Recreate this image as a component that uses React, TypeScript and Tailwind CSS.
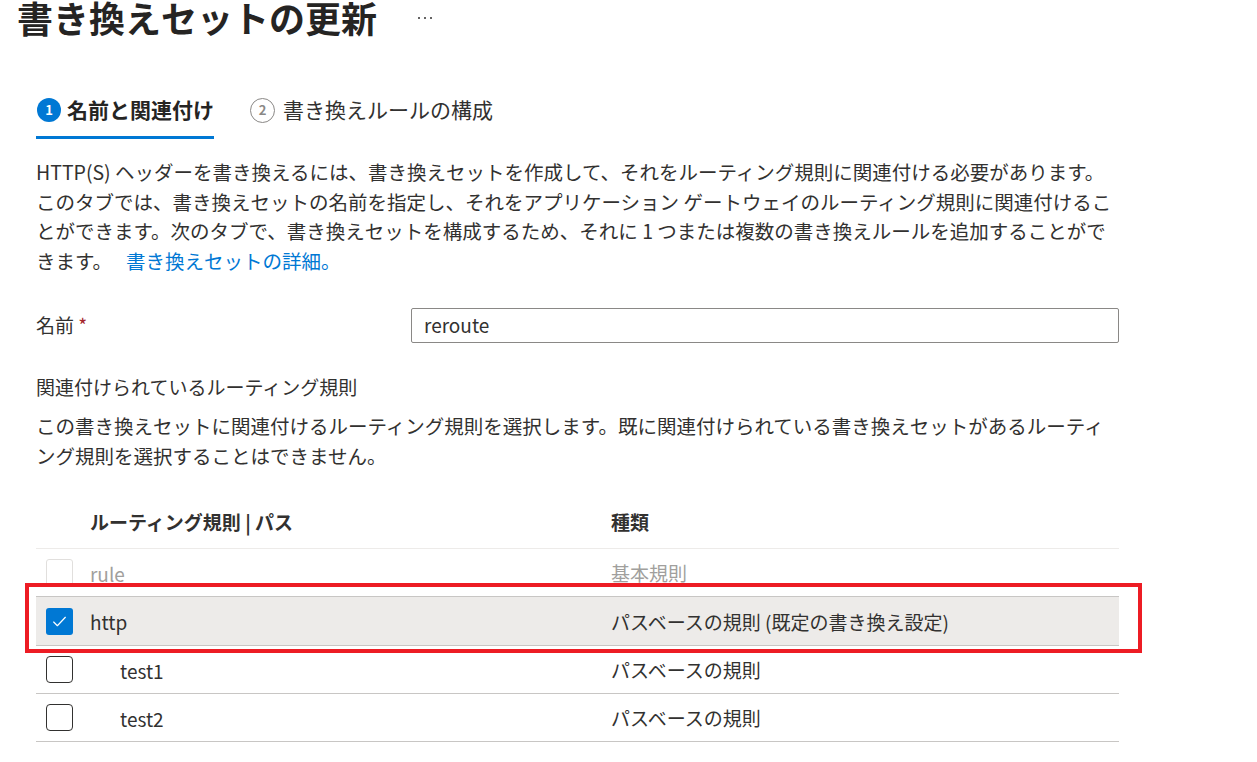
import React from "react";

interface RuleRow {
    id: string;
    name: string;
    kind: string;
    indent?: boolean;
    checked?: boolean;
    disabled?: boolean;
}

const rows: RuleRow[] = [
    { id: "rule", name: "rule", kind: "基本規則", disabled: true },
    { id: "http", name: "http", kind: "パスベースの規則 (既定の書き換え設定)", checked: true },
    { id: "test1", name: "test1", kind: "パスベースの規則", indent: true },
    { id: "test2", name: "test2", kind: "パスベースの規則", indent: true },
];

function Checkbox({ checked, disabled }: { checked?: boolean; disabled?: boolean }) {
    if (checked) {
        return (
            <div className="w-[27px] h-[27px] rounded-[3px] bg-[#0078d4] flex items-center justify-center">
                <svg width="17" height="17" viewBox="0 0 16 16" fill="none">
                    <path d="M2.5 8.5 L6 12 L13.5 4" stroke="white" strokeWidth="1.1" strokeLinecap="round" strokeLinejoin="round" />
                </svg>
            </div>
        );
    }
    return (
        <div
            className={
                disabled
                    ? "w-[27px] h-[27px] rounded-[3px] border border-[#e1dfdd] bg-white"
                    : "w-[27px] h-[27px] rounded-[4px] border-[1.5px] border-[#323130] bg-white"
            }
        />
    );
}

export default function App() {
    return (
        <div className="min-h-screen bg-white text-[#323130] overflow-hidden font-['Noto_Sans_CJK_JP',sans-serif]">
            {/* Header */}
            <div className="flex items-center pl-[17px] -mt-[5px] h-[44px]">
                <h1 className="text-[36px] leading-[44px] font-semibold text-[#252423] whitespace-nowrap">
                    書き換えセットの更新
                </h1>
                <div className="ml-[41px] mt-[1px] flex items-center gap-[4px]">
                    <span className="w-[2px] h-[2px] bg-[#323130] rounded-full" />
                    <span className="w-[2px] h-[2px] bg-[#323130] rounded-full" />
                    <span className="w-[2px] h-[2px] bg-[#323130] rounded-full" />
                </div>
            </div>

            <div className="pl-[36px] w-[1119px]">
                {/* Tabs */}
                <div className="flex gap-[36px] mt-[49px]">
                    <div className="flex items-center gap-[6px] h-[51px] pb-[4px] border-b-[3px] border-[#0078d4]">
                        <span className="ml-[1px] w-[24px] h-[24px] rounded-full bg-[#0078d4] text-white text-[13px] font-bold flex items-center justify-center">
                            1
                        </span>
                        <span className="text-[21px] font-bold text-[#252423]">名前と関連付け</span>
                    </div>
                    <div className="flex items-center gap-[8px] h-[51px] pb-[4px] border-b-[3px] border-transparent">
                        <span className="w-[25px] h-[25px] rounded-full border-[1.5px] border-[#8a8886] text-[#8a8886] text-[13px] font-bold flex items-center justify-center">
                            2
                        </span>
                        <span className="text-[21px] text-[#323130]">書き換えルールの構成</span>
                    </div>
                </div>

                {/* Intro */}
                <p className="mt-[18px] text-[19.5px] leading-[29.5px] whitespace-nowrap">
                    HTTP(S) ヘッダーを書き換えるには、書き換えセットを作成して、それをルーティング規則に関連付ける必要があります。
                    <br />
                    このタブでは、書き換えセットの名前を指定し、それをアプリケーション ゲートウェイのルーティング規則に関連付けるこ
                    <br />
                    とができます。次のタブで、書き換えセットを構成するため、それに 1 つまたは複数の書き換えルールを追加することがで
                    <br />
                    きます。
                    <a href="#" className="ml-[14px] text-[#0078d4]">
                        書き換えセットの詳細。
                    </a>
                </p>

                {/* Name field */}
                <div className="mt-[33px] flex items-center">
                    <label className="w-[375px] text-[19px]">
                        名前 <span className="text-[#a4262c]">*</span>
                    </label>
                    <div className="w-[708px] h-[35px] border border-[#8a8886] rounded-[2px] px-[12px] flex items-center text-[19px]">
                        reroute
                    </div>
                </div>

                {/* Routing rules */}
                <div className="mt-[29px] text-[19px] leading-[29px]">関連付けられているルーティング規則</div>
                <p className="mt-[10px] text-[19.5px] leading-[30px] whitespace-nowrap">
                    この書き換えセットに関連付けるルーティング規則を選択します。既に関連付けられている書き換えセットがあるルーティ
                    <br />
                    ング規則を選択することはできません。
                </p>

                <div className="mt-[29px]">
                    <div className="flex items-center h-[49px] pb-[4px] border-b border-[#edebe9] text-[19px] font-bold">
                        <div className="w-[575px] pl-[54px]">ルーティング規則 | パス</div>
                        <div>種類</div>
                    </div>
                    {rows.map((row) => (
                        <div
                            key={row.id}
                            className={
                                row.checked
                                    ? "relative flex items-center h-[49px] border-b border-[#c8c6c4] bg-[#edebe9] text-[19px]"
                                    : "relative flex items-center h-[48px] border-b border-[#c8c6c4] text-[19px]"
                            }
                        >
                            <div className="w-[575px] flex items-center">
                                <div className="pl-[10px] pr-[17px]">
                                    <Checkbox checked={row.checked} disabled={row.disabled} />
                                </div>
                                <span
                                    className={
                                        (row.indent ? "pl-[30px] " : "") +
                                        (row.disabled ? "text-[#a19f9d] pt-[3px]" : "pt-[3px]")
                                    }
                                >
                                    {row.name}
                                </span>
                            </div>
                            <div className={row.disabled ? "text-[#a19f9d] pt-[2px]" : "pt-[2px]"}>{row.kind}</div>
                            {row.checked && (
                                <div className="absolute -left-[11px] -top-[14px] -right-[23px] -bottom-[8px] border-4 border-[#ed1c24] pointer-events-none" />
                            )}
                        </div>
                    ))}
                </div>
            </div>
        </div>
    );
}
